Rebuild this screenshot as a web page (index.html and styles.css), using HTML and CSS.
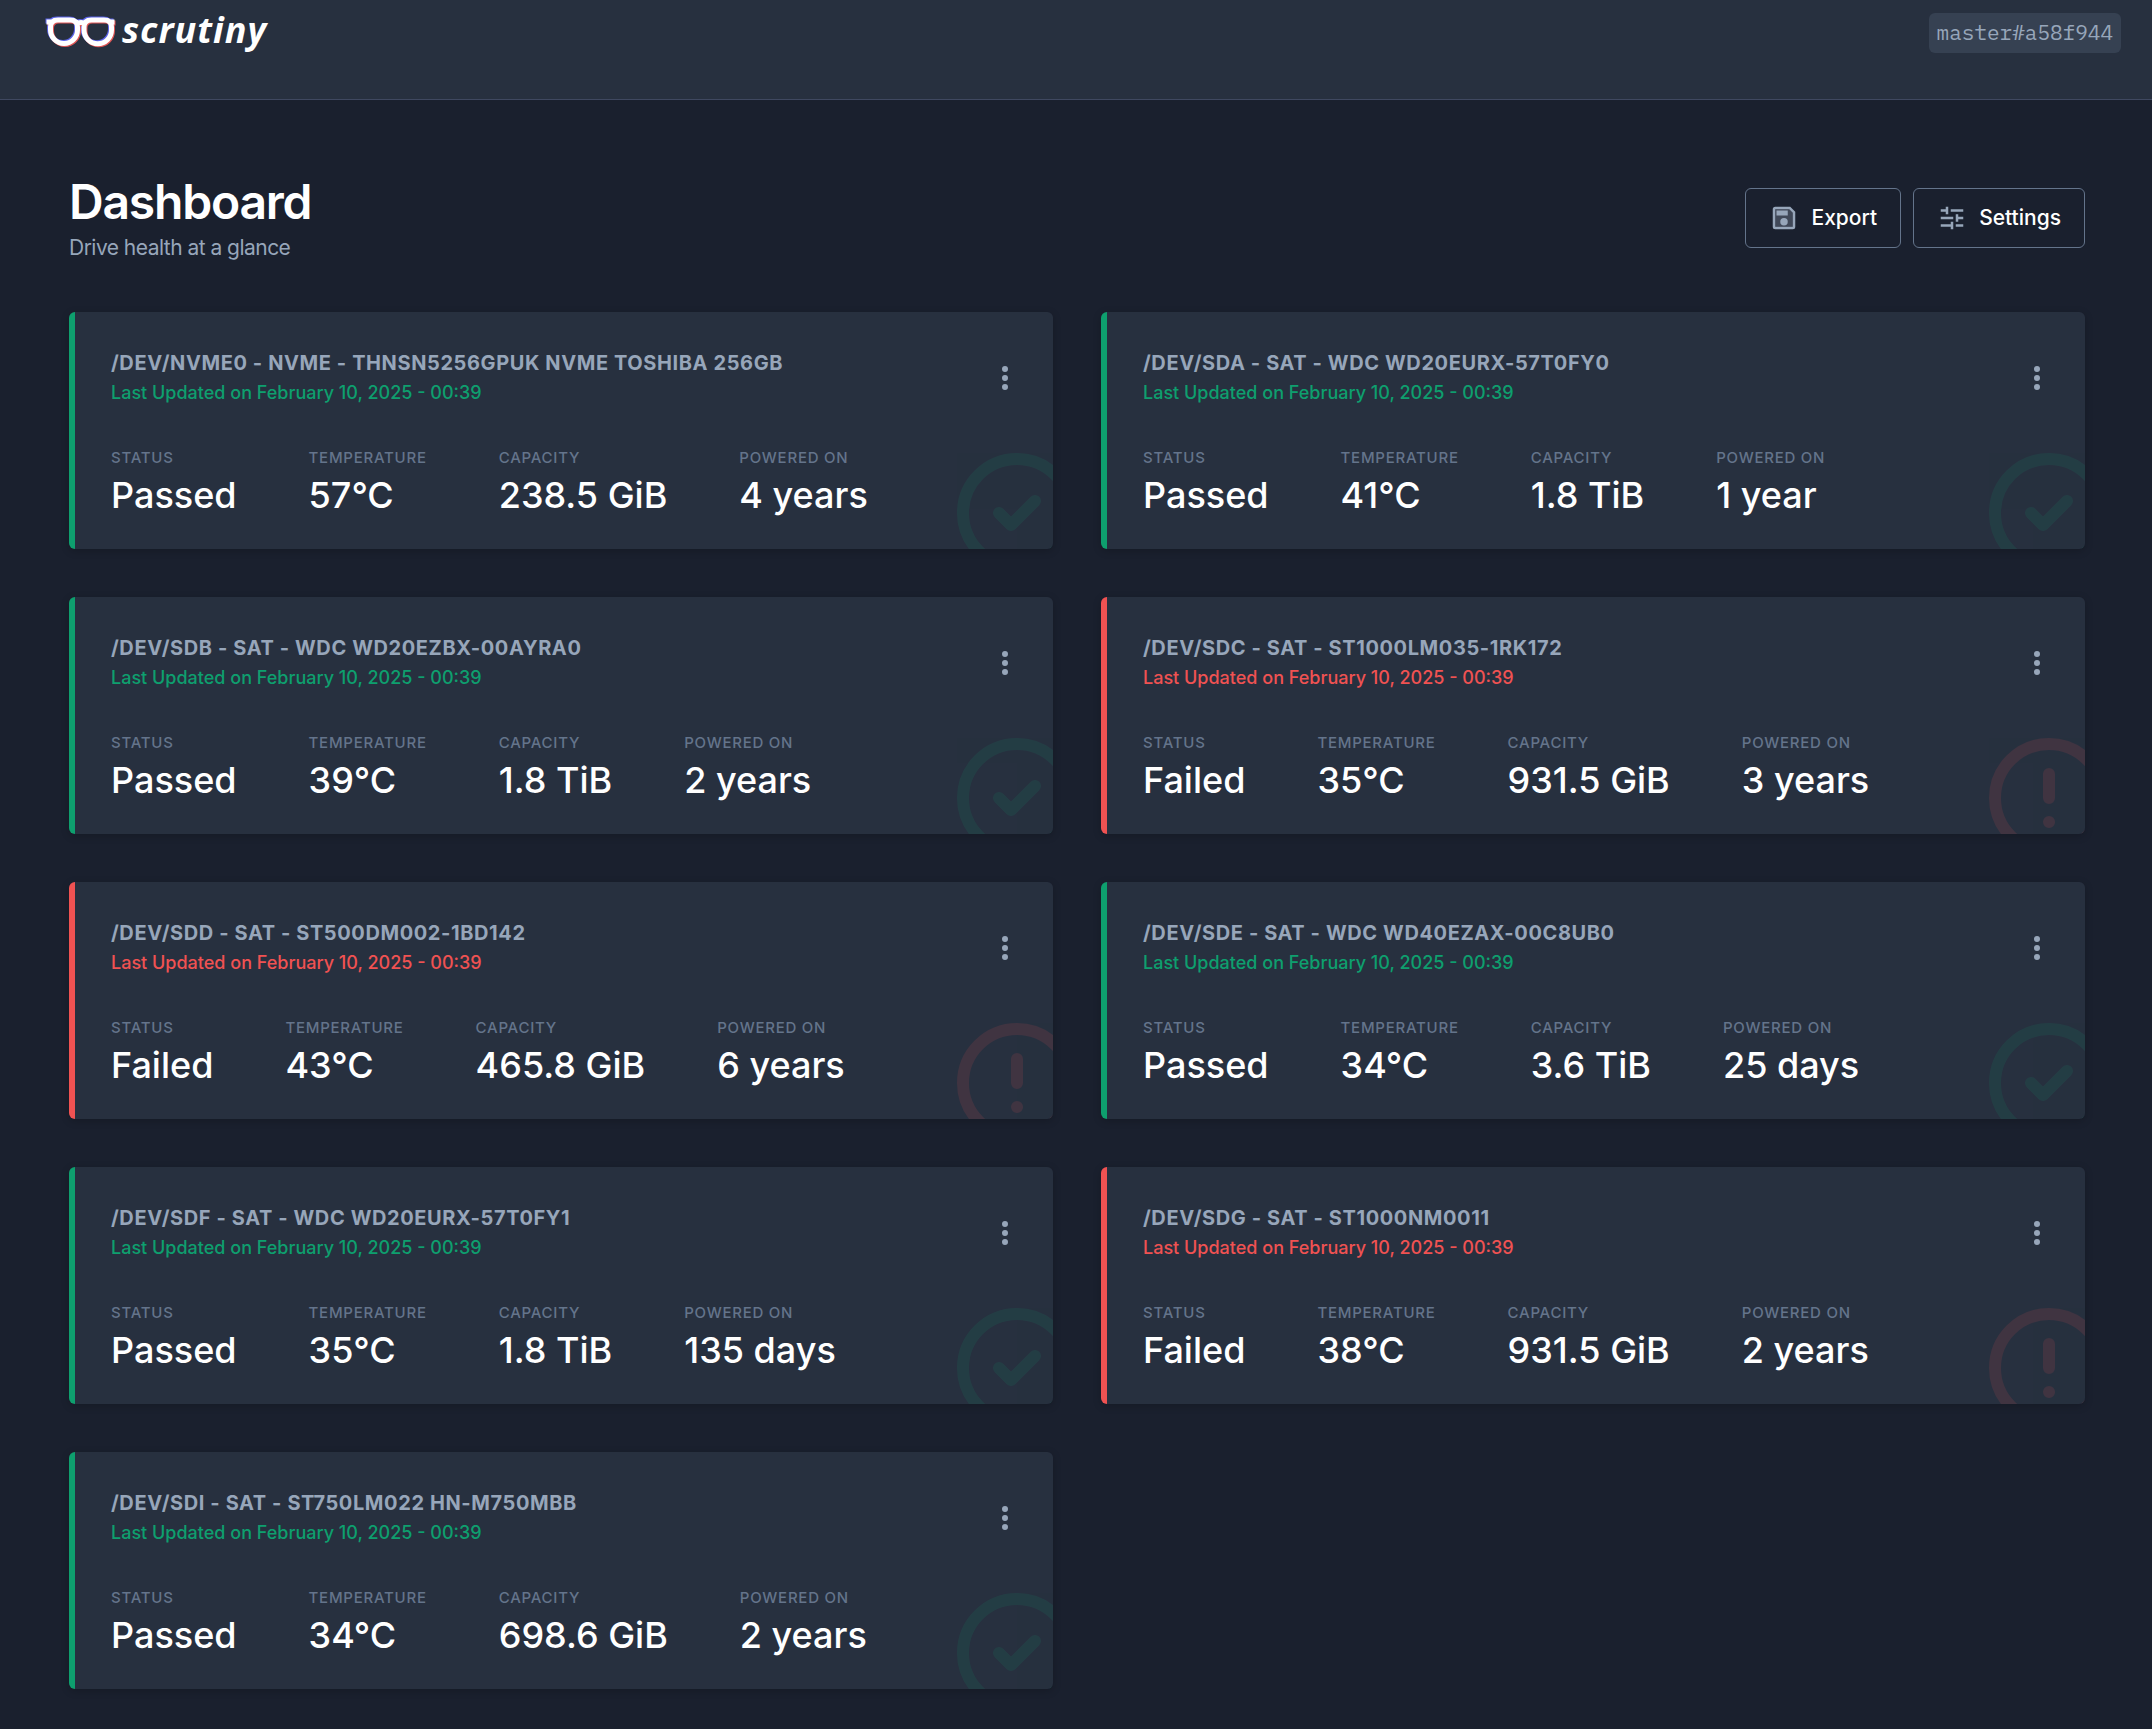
FILE: index.html
```html
<!DOCTYPE html>
<html lang="en">
<head>
<meta charset="utf-8">
<title>Scrutiny</title>
<link rel="stylesheet" href="styles.css">
</head>
<body>
<svg class="sprite" aria-hidden="true">
  <symbol id="check" viewBox="0 0 24 24"><path fill="none" stroke="currentColor" stroke-width="2" stroke-linecap="round" stroke-linejoin="round" d="M9 12l2 2 4-4m6 2a9 9 0 11-18 0 9 9 0 0118 0z"/></symbol>
  <symbol id="alert" viewBox="0 0 24 24"><path fill="none" stroke="currentColor" stroke-width="2" stroke-linecap="round" stroke-linejoin="round" d="M12 8v4m0 4h.01M21 12a9 9 0 11-18 0 9 9 0 0118 0z"/></symbol>
  <symbol id="dots" viewBox="0 0 24 24"><path fill="currentColor" d="M12 8a2 2 0 100-4 2 2 0 000 4zm0 2a2 2 0 100 4 2 2 0 000-4zm0 6a2 2 0 100 4 2 2 0 000-4z"/></symbol>
  <symbol id="glasses" viewBox="0 0 72 34"><path fill="none" stroke="currentColor" stroke-width="5" d="M5.500 13Q5.500 6 13 6H25Q32.500 6 32.500 13V16A13.500 13.500 0 0 1 5.500 16ZM39 13Q39 6 46.500 6H59Q66.500 6 66.500 13V16A13.500 13.500 0 0 1 39 16ZM1.500 8H7M65 8H69.500M31 10Q36 7 41 10"/></symbol>
</svg>
<header class="topbar">
  <a class="logo" href="#" aria-label="scrutiny">
    <svg class="glasses" viewBox="0 0 72 34" aria-hidden="true">
      <use href="#glasses" x="-1" y="-1" width="72" height="34" color="#5a62e8"/>
      <use href="#glasses" x="1" y="1" width="72" height="34" color="#e05555"/>
      <use href="#glasses" width="72" height="34" color="#fff"/>
    </svg>
    <span class="wordmark">scrutiny</span>
  </a>
  <code class="version">master#a58f944</code>
</header>
<main class="page">
  <div class="page-head">
    <div>
      <h1 class="page-title">Dashboard</h1>
      <p class="page-sub">Drive health at a glance</p>
    </div>
    <div class="actions">
      <button class="btn" type="button">
        <svg class="btn-icon" viewBox="0 0 24 24" aria-hidden="true"><path fill="currentColor" fill-opacity=".3" d="M5 5v14h14V7.83L16.170 5H5z"/><path fill="currentColor" d="M17 3H5a2 2 0 00-2 2v14a2 2 0 002 2h14a2 2 0 002-2V7l-4-4zm2 16H5V5h11.170L19 7.830V19zM12 12a3 3 0 100 6 3 3 0 000-6zM6 6h9v4H6z"/></svg>
        Export
      </button>
      <button class="btn" type="button">
        <svg class="btn-icon" viewBox="0 0 24 24" aria-hidden="true"><path fill="currentColor" d="M3 5h4V3h2v6H7V7H3zM11 5h10v2H11zM3 11h10v2H3zM15 9h2v2h4v2h-4v2h-2zM3 17h8v-2h2v6h-2v-2H3zM15 17h6v2h-6z"/></svg>
        Settings
      </button>
    </div>
  </div>
  <div class="drives" id="drives"></div>
</main>
<script src="drives.js"></script>
</body>
</html>
```
FILE: styles.css
```css
* { box-sizing: border-box; }
body {
  margin: 0;
  background: #1a202e;
  color: #fff;
  font-family: Inter, "Liberation Sans", sans-serif;
  font-size: 21px;
  line-height: 30px;
}
h1, h2, p, dl, dd { margin: 0; }
.sprite { display: none; }
.topbar {
  display: flex;
  justify-content: space-between;
  align-items: flex-start;
  height: 100px;
  padding: 13px 31px 0 45px;
  background: #27303f;
  border-bottom: 1px solid #3f4860;
}
.logo {
  display: flex;
  align-items: center;
  gap: 5px;
  height: 36px;
  color: #fff;
  text-decoration: none;
}
.glasses { width: 72px; height: 34px; overflow: visible; }
.wordmark {
  font-family: "Open Sans", sans-serif;
  font-size: 36px;
  font-weight: 700;
  font-style: italic;
  line-height: 34px;
  height: 36px;
  letter-spacing: 1px;
}
.version {
  padding: 4px 8px 6px;
  border-radius: 6px;
  background: #364152;
  color: #97a6ba;
  font-family: "IBM Plex Mono", "Liberation Mono", monospace;
  font-size: 21px;
  line-height: 30px;
}
.page { padding: 72px 67px 40px 69px; }
.page-head {
  display: flex;
  justify-content: space-between;
  align-items: center;
  margin-bottom: 48px;
}
.page-title,
.page-sub { letter-spacing: -0.025em; }
.page-title {
  font-size: 48px;
  font-weight: 600;
  line-height: 60px;
}
.page-sub {
  color: #97a6ba;
  line-height: 32px;
}
.actions { display: flex; gap: 12px; }
.btn {
  display: flex;
  align-items: center;
  gap: 12px;
  height: 60px;
  padding: 0 23px;
  border: 1px solid #64748b;
  border-radius: 6px;
  background: transparent;
  color: #fff;
  font: 500 21px/30px Inter, "Liberation Sans", sans-serif;
}
.btn-icon { width: 30px; height: 30px; color: #97a6ba; }
.drives {
  display: grid;
  grid-template-columns: repeat(2, minmax(0, 1fr));
  gap: 48px;
}
.drive {
  --state: #0e9f6e;
  position: relative;
  overflow: hidden;
  padding: 36px 36px 36px 42px;
  border-radius: 6px;
  background: linear-gradient(to right, var(--state) 6px, #27303f 6px);
  box-shadow: 0 2px 9px rgba(0, 0, 0, 0.2);
}
.drive.failed { --state: #f05252; }
.drive-mark {
  position: absolute;
  right: -36px;
  bottom: -36px;
  width: 144px;
  height: 144px;
  color: var(--state);
  opacity: 0.12;
}
.drive-head {
  display: flex;
  justify-content: space-between;
  align-items: center;
  margin-bottom: 36px;
}
.drive-name {
  color: #97a6ba;
  font-size: 20px;
  font-weight: 700;
  line-height: 30px;
  letter-spacing: 0.03em;
  text-transform: uppercase;
}
.drive-name a { color: inherit; text-decoration: none; }
.drive-updated {
  color: var(--state);
  font-size: 18px;
  font-weight: 500;
}
.menu {
  width: 36px;
  height: 36px;
  margin-right: -6px;
  padding: 0;
  border: 0;
  background: none;
  color: #97a6ba;
}
.menu svg { display: block; width: 36px; height: 36px; }
.stats { display: flex; gap: 72px; }
.stats dt {
  margin-bottom: 6px;
  color: #64748b;
  font-size: 15px;
  font-weight: 500;
  line-height: 27px;
  letter-spacing: 0.05em;
  text-transform: uppercase;
}
.stats dd {
  font-size: 36px;
  font-weight: 500;
  line-height: 36px;
}
```
FILE: drives.js
```js
const drives = [
  ["/dev/nvme0 - nvme - THNSN5256GPUK NVMe TOSHIBA 256GB", "Passed", "57°C", "238.5 GiB", "4 years"],
  ["/dev/sda - sat - WDC WD20EURX-57T0FY0", "Passed", "41°C", "1.8 TiB", "1 year"],
  ["/dev/sdb - sat - WDC WD20EZBX-00AYRA0", "Passed", "39°C", "1.8 TiB", "2 years"],
  ["/dev/sdc - sat - ST1000LM035-1RK172", "Failed", "35°C", "931.5 GiB", "3 years"],
  ["/dev/sdd - sat - ST500DM002-1BD142", "Failed", "43°C", "465.8 GiB", "6 years"],
  ["/dev/sde - sat - WDC WD40EZAX-00C8UB0", "Passed", "34°C", "3.6 TiB", "25 days"],
  ["/dev/sdf - sat - WDC WD20EURX-57T0FY1", "Passed", "35°C", "1.8 TiB", "135 days"],
  ["/dev/sdg - sat - ST1000NM0011", "Failed", "38°C", "931.5 GiB", "2 years"],
  ["/dev/sdi - sat - ST750LM022 HN-M750MBB", "Passed", "34°C", "698.6 GiB", "2 years"],
];
const labels = ["Status", "Temperature", "Capacity", "Powered On"];

document.getElementById("drives").innerHTML = drives.map(([name, ...stats]) => {
  const failed = stats[0] === "Failed";
  return `<article class="drive${failed ? " failed" : ""}">
    <svg class="drive-mark" aria-hidden="true"><use href="#${failed ? "alert" : "check"}"/></svg>
    <div class="drive-head">
      <div>
        <h2 class="drive-name"><a href="#">${name}</a></h2>
        <p class="drive-updated">Last Updated on February 10, 2025 - 00:39</p>
      </div>
      <button class="menu" type="button" aria-label="Drive menu"><svg aria-hidden="true"><use href="#dots"/></svg></button>
    </div>
    <dl class="stats">${stats.map((s, i) => `<div><dt>${labels[i]}</dt><dd>${s}</dd></div>`).join("")}</dl>
  </article>`;
}).join("");
```
